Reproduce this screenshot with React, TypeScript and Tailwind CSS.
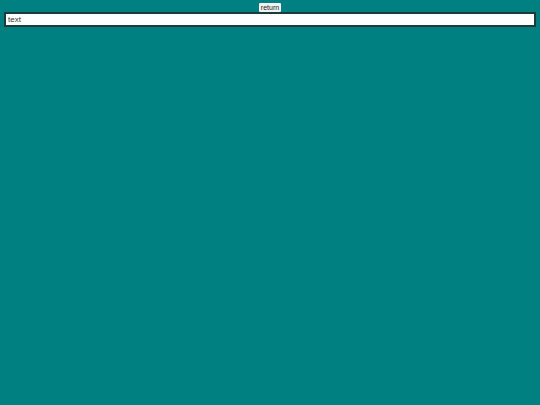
export default function App() {
  return (
    <div className="min-h-[405px] w-full bg-[#008080] pt-[3px] font-['Liberation_Sans',Arial,sans-serif]">
      <div className="flex justify-center">
        <button className="h-[9px] w-[22px] rounded-[1px] bg-[#f2f2f2] text-[7px] leading-[9px] text-[#222]">
          return
        </button>
      </div>
      <div className="mx-[4px] flex h-[15px] items-center border-2 border-[#1c3b3b] bg-white pl-[2px] pt-[1px] text-[8px] text-[#333]">
        text
      </div>
    </div>
  );
}
